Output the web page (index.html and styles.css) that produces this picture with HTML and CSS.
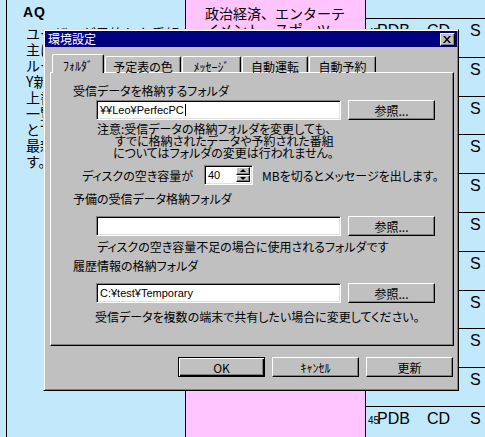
FILE: index.html
```html
<!DOCTYPE html>
<html lang="ja">
<head>
<meta charset="utf-8">
<title>環境設定</title>
<link rel="stylesheet" href="styles.css">
</head>
<body>
<div class="page">
  <section class="col col-left">
    <h2 class="col-title">AQ</h2>
    <div class="col-text">
      <span>ユーザーが予約した番組を</span>
      <span>主にジャンル別に分類し、</span>
      <span>ルールに従って自動的に</span>
      <span>Y新聞などの番組表から</span>
      <span>上書き保存します。</span>
      <span>一覧から選択するだけで</span>
      <span>とても簡単に録画予約が</span>
      <span>最新の情報で行えま</span>
      <span>す。</span>
    </div>
  </section>
  <section class="col col-pink">
    <p class="genre">政治経済、エンターテ<br>イメント、スポーツ</p>
  </section>
  <section class="col col-right">
    <div class="prog-row"><span class="num">45</span><span>PDB</span><span>CD</span><span>S</span></div>
    <div class="prog-row"><span class="num">45</span><span>PDB</span><span>CD</span><span>S</span></div>
    <div class="prog-row"><span class="num">45</span><span>PDB</span><span>CD</span><span>S</span></div>
    <div class="prog-row"><span class="num">45</span><span>PDB</span><span>CD</span><span>S</span></div>
    <div class="prog-row"><span class="num">45</span><span>PDB</span><span>CD</span><span>S</span></div>
    <div class="prog-row"><span class="num">45</span><span>PDB</span><span>CD</span><span>S</span></div>
    <div class="prog-row"><span class="num">45</span><span>PDB</span><span>CD</span><span>S</span></div>
    <div class="prog-row"><span class="num">45</span><span>PDB</span><span>CD</span><span>S</span></div>
    <div class="prog-row"><span class="num">45</span><span>PDB</span><span>CD</span><span>S</span></div>
    <div class="prog-row"><span class="num">45</span><span>PDB</span><span>CD</span><span>S</span></div>
    <div class="prog-row"><span class="num">45</span><span>PDB</span><span>CD</span><span>S</span></div>
  </section>

  <div class="dialog" role="dialog" aria-label="環境設定">
    <div class="titlebar">
      <span class="title">環境設定</span>
      <span class="close-btn" aria-label="閉じる">
        <svg width="8" height="7" viewBox="0 0 8 7"><path d="M0 0h2l2 2.4L6 0h2L5 3.5 8 7H6L4 4.6 2 7H0l3-3.5z" fill="#000"/></svg>
      </span>
    </div>
    <div class="tabs">
      <span class="tab tab-active w1">ﾌｫﾙﾀﾞ</span>
      <span class="tab w2">予定表の色</span>
      <span class="tab w3">ﾒｯｾｰｼﾞ</span>
      <span class="tab w4">自動運転</span>
      <span class="tab w5">自動予約</span>
    </div>
    <div class="panel">
      <div class="field-label">受信データを格納するフォルダ</div>
      <div class="field-row">
        <div class="field">¥¥Leo¥PerfecPC<span class="caret"></span></div>
        <span class="btn">参照...</span>
      </div>
      <div class="note">
        <span class="n1">注意:受信データの格納フォルダを変更しても、</span>
        <span class="n2">すでに格納されたデータや予約された番組</span>
        <span class="n3">についてはフォルダの変更は行われません。</span>
      </div>
      <div class="disk-row">
        <span class="disk-label">ディスクの空き容量が</span>
        <div class="spin">
          <span class="spin-value">40</span>
          <span class="spin-btns">
            <span class="spin-btn"><i class="tri-up"></i></span>
            <span class="spin-btn"><i class="tri-down"></i></span>
          </span>
        </div>
        <span class="disk-unit">MBを切るとメッセージを出します。</span>
      </div>
      <div class="field-label gap-a">予備の受信データ格納フォルダ</div>
      <div class="field-row gap-b">
        <div class="field"></div>
        <span class="btn">参照...</span>
      </div>
      <div class="hint hint-a">ディスクの空き容量不足の場合に使用されるフォルダです</div>
      <div class="field-label gap-c">履歴情報の格納フォルダ</div>
      <div class="field-row gap-b">
        <div class="field">C:¥test¥Temporary</div>
        <span class="btn">参照...</span>
      </div>
      <div class="hint hint-b">受信データを複数の端末で共有したい場合に変更してください。</div>
    </div>
    <div class="actions">
      <span class="btn btn-default">OK</span>
      <span class="btn">ｷｬﾝｾﾙ</span>
      <span class="btn">更新</span>
    </div>
  </div>
</div>
</body>
</html>
```
FILE: styles.css
```css
* { box-sizing: border-box; }
html, body { margin: 0; padding: 0; }
body {
  width: 485px;
  height: 437px;
  overflow: hidden;
  background: #c2e8fc;
  font-family: "Noto Sans CJK JP", sans-serif;
  color: #000;
}
.page {
  position: relative;
  display: flex;
  height: 437px;
}

/* background columns */
.col { height: 437px; }
.col-left {
  margin-left: 6px;
  width: 180px;
  border-left: 1px solid #000;
  border-right: 1px solid #000;
  padding: 4px 0 0 16px;
}
.col-title {
  margin: 0;
  font: bold 14px/16px "Liberation Sans", sans-serif;
  letter-spacing: 1px;
}
.col-text {
  margin: 5px 0 0 3px;
  font-size: 14px;
  line-height: 16px;
}
.col-text span { display: block; white-space: nowrap; overflow: hidden; }

.col-pink {
  width: 180px;
  background: #ffc4fd;
  border-right: 1px solid #000;
  padding: 5px 0 0 19px;
}
.genre {
  margin: 0;
  font-size: 14px;
  line-height: 16px;
  white-space: nowrap;
}

.col-right {
  flex: 1;
  padding-top: 18px;
}
.prog-row {
  height: 38.8px;
  border-top: 1px solid #000;
  display: grid;
  grid-template-columns: 9px 50px 43px auto;
  align-items: baseline;
  align-content: start;
  padding: 3px 0 0 2px;
  font: 16px/18px "Liberation Sans", sans-serif;
  white-space: nowrap;
}
.prog-row .num { font-size: 10px; }

/* dialog */
.dialog {
  position: absolute;
  left: 43px;
  top: 29px;
  width: 416px;
  height: 362px;
  background: #c0c0c0;
  border: 1px solid;
  border-color: #dfdfdf #000 #000 #dfdfdf;
  box-shadow: inset 1px 1px #fff, inset -1px -1px #808080;
  padding: 1px;
  font-size: 12px;
  font-feature-settings: "palt";
}
.titlebar {
  height: 16px;
  background: #000080;
  color: #fff;
  display: flex;
  align-items: center;
  padding: 0 2px 0 3px;
}
.title { font-size: 12px; line-height: 16px; }
.close-btn {
  margin-left: auto;
  width: 15px;
  height: 13px;
  background: #c0c0c0;
  border: 1px solid;
  border-color: #fff #000 #000 #fff;
  box-shadow: inset -1px -1px #808080;
  display: flex;
  align-items: center;
  justify-content: center;
  padding-right: 1px;
}
.close-btn svg { display: block; }

.tabs {
  height: 25px;
  display: flex;
  align-items: flex-end;
  padding-left: 7px;
}
.tab {
  height: 16px;
  border: 1px solid;
  border-bottom: 0;
  border-color: #fff #000 #000 #fff;
  border-radius: 2px 2px 0 0;
  box-shadow: inset -1px 0 #808080;
  text-align: center;
  line-height: 13px;
  padding-top: 3px;
  white-space: nowrap;
  margin-right: 1px;
}
.tab-active {
  height: 19px;
  margin-bottom: -1px;
  position: relative;
  z-index: 1;
  background: #c0c0c0;
  padding-top: 4px;
}
.w1 { width: 52px; margin-right: 1px; }
.w2 { width: 76px; }
.w3 { width: 59px; }
.w4 { width: 66px; }
.w5 { width: 67px; }

.panel {
  margin-left: 5px;
  width: 404px;
  height: 274px;
  border: 1px solid;
  border-color: #fff #000 #000 #fff;
  box-shadow: inset -1px -1px #808080;
  padding: 11px 0 0 22px;
}
.field-label { line-height: 13px; white-space: nowrap; }
.field-row {
  display: flex;
  gap: 7px;
  margin: 3px 0 0 23px;
  height: 20px;
}
.field {
  width: 245px;
  height: 20px;
  background: #fff;
  border: 1px solid;
  border-color: #808080 #fff #fff #808080;
  box-shadow: inset 1px 1px #000, inset -1px -1px #dfdfdf;
  padding: 0 0 0 3px;
  font: 11px/18px "Liberation Sans", "Noto Sans CJK JP", sans-serif;
  white-space: nowrap;
  display: flex;
  align-items: center;
}
.caret {
  display: inline-block;
  width: 1px;
  height: 12px;
  background: #000;
  margin-left: 1px;
}
.btn {
  width: 87px;
  height: 20px;
  background: #c0c0c0;
  border: 1px solid;
  border-color: #fff #000 #000 #fff;
  box-shadow: inset -1px -1px #808080;
  display: flex;
  align-items: center;
  justify-content: center;
  line-height: 13px;
  white-space: nowrap;
}
.btn-default {
  border-color: #000;
  box-shadow: inset 1px 1px #fff, inset -1px -1px #000, inset -2px -2px #808080;
}

.note {
  margin-top: 3px;
  line-height: 12px;
  white-space: nowrap;
}
.note span { display: block; }
.n1 { padding-left: 24px; }
.n2 { padding-left: 42px; }
.n3 { padding-left: 40px; }

.disk-row {
  display: flex;
  align-items: center;
  margin-top: 6px;
  height: 20px;
  padding-left: 9px;
  white-space: nowrap;
}
.disk-label { width: 122px; }
.spin {
  width: 49px;
  height: 20px;
  display: flex;
  background: #fff;
  border: 1px solid;
  border-color: #808080 #fff #fff #808080;
  box-shadow: inset 1px 1px #000, inset -1px -1px #dfdfdf;
  padding: 2px;
}
.spin-value {
  flex: 1;
  font: 11px/14px "Liberation Sans", sans-serif;
  padding-left: 1px;
}
.spin-btns {
  width: 14px;
  display: flex;
  flex-direction: column;
  margin-top: -1px;
}
.spin-btn {
  flex: 1;
  background: #c0c0c0;
  border: 1px solid;
  border-color: #fff #000 #000 #fff;
  box-shadow: inset -1px -1px #808080;
  display: flex;
  align-items: center;
  justify-content: center;
}
.tri-up, .tri-down {
  display: block;
  width: 0;
  height: 0;
  border-left: 3px solid transparent;
  border-right: 3px solid transparent;
}
.tri-up { border-bottom: 3px solid #000; }
.tri-down { border-top: 3px solid #000; }
.disk-unit { margin-left: 9px; }

.gap-a { margin-top: 7px; }
.gap-b { margin-top: 11px; }
.gap-c { margin-top: 6px; }
.hint { line-height: 13px; white-space: nowrap; }
.hint-a { margin-top: 4px; padding-left: 24px; }
.hint-b { margin-top: 7px; padding-left: 22px; }

.actions {
  display: flex;
  justify-content: flex-end;
  gap: 7px;
  margin-top: 11px;
  padding-right: 4px;
}
```
